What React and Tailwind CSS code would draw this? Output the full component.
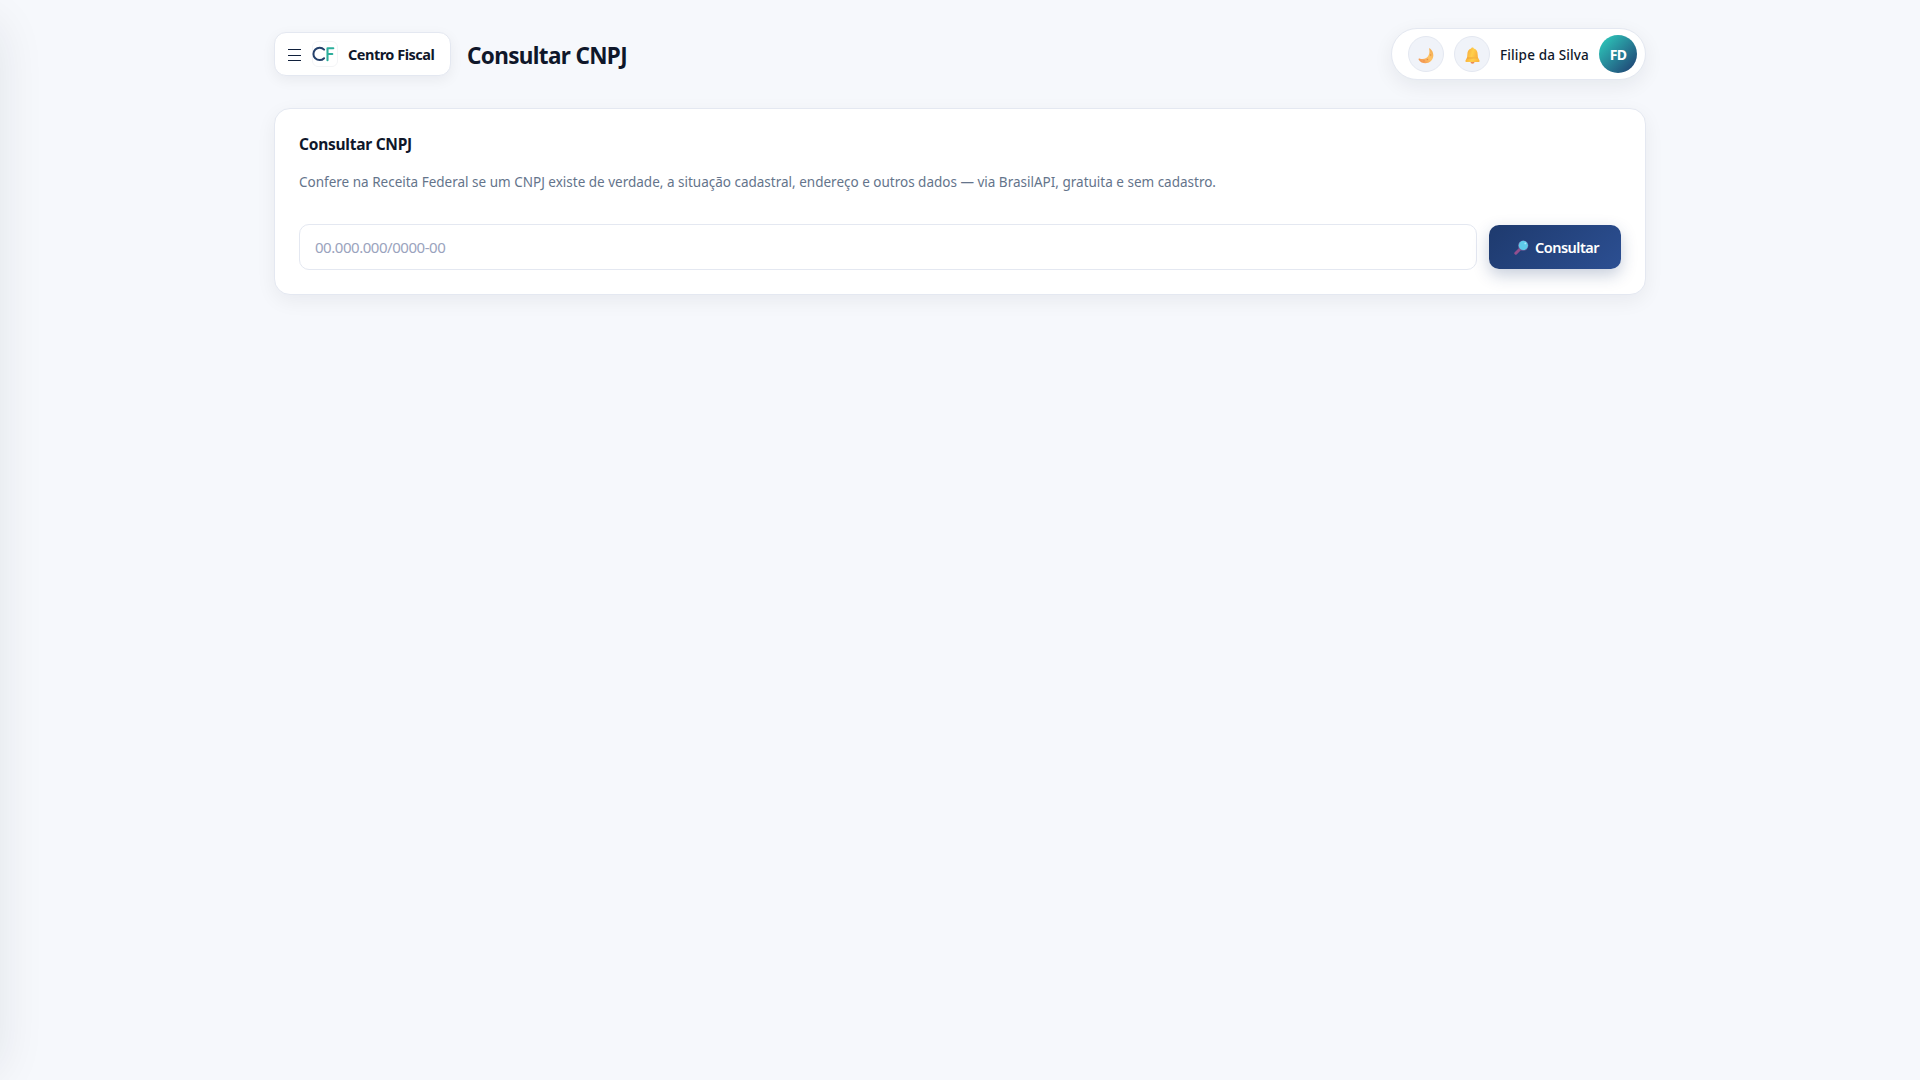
import React from "react";

function MoonIcon() {
  return (
    <svg width="16" height="16" viewBox="0 0 16 16" className="block">
      <defs>
        <linearGradient id="moon" x1="1" y1="0" x2="0" y2="1">
          <stop offset="0" stopColor="#f0a64c" />
          <stop offset="0.45" stopColor="#ffc567" />
          <stop offset="1" stopColor="#f08a4b" />
        </linearGradient>
      </defs>
      <path d="M12 0.5C16 3.6 16.5 9.5 13 13C9.4 16.4 3.4 16 0.6 11.4C0.3 10.6 0.9 10.3 1.5 10.6C5.6 12 9.2 10.4 10.7 7C11.6 5 11.6 3 11.2 1C11.1 0.4 11.5 0.2 12 0.5Z" fill="url(#moon)" />
      <circle cx="12.6" cy="7" r="0.8" fill="#e58f45" />
      <circle cx="9.4" cy="11.5" r="0.8" fill="#e58f45" />
      <circle cx="6" cy="12.8" r="0.6" fill="#e07c4a" />
    </svg>
  );
}

function BellIcon() {
  return (
    <svg width="15" height="17" viewBox="0 0 15 17" className="block">
      <defs>
        <linearGradient id="bell" x1="0" y1="0" x2="1" y2="0.3">
          <stop offset="0" stopColor="#f7a63a" />
          <stop offset="0.6" stopColor="#ffcf4a" />
          <stop offset="1" stopColor="#fbb63d" />
        </linearGradient>
      </defs>
      <ellipse cx="7.5" cy="15" rx="2" ry="1.7" fill="#ea8a55" />
      <path d="M6.2 1.6C6.2 0.2 8.8 0.2 8.8 1.6C11.4 2.2 12.5 4.3 12.6 6.8L13 11H2L2.4 6.8C2.5 4.3 3.6 2.2 6.2 1.6Z" fill="url(#bell)" />
      <path d="M2 10.6H13L14.5 13.4C14.8 14.4 14.2 15 13.4 15H1.6C0.8 15 0.2 14.4 0.5 13.4Z" fill="url(#bell)" />
      <path d="M2 11H13" stroke="#eb9a38" strokeWidth="0.6" />
    </svg>
  );
}

function SearchIcon() {
  return (
    <svg width="15" height="15" viewBox="0 0 15 15" className="block">
      <path d="M1.8 13.2L5.8 9.2" stroke="#934f8e" strokeWidth="3" strokeLinecap="round" />
      <circle cx="9.2" cy="5.6" r="5.2" fill="#6b5f9c" />
      <circle cx="9.3" cy="5.4" r="4.6" fill="#5ecbea" />
      <circle cx="11.3" cy="3.4" r="0.9" fill="#a9ebfa" />
    </svg>
  );
}

function Logo() {
  return (
    <svg width="26" height="26" viewBox="0 0 26 26" className="block">
      <rect x="0.5" y="0.5" width="25" height="25" rx="5.5" fill="#fff" stroke="#f3f4f6" />
      <path d="M12.1 8.6A6.2 6.2 0 1 0 12.1 17.2" fill="none" stroke="#24406b" strokeWidth="2" strokeLinecap="round" />
      <path d="M15.5 19.2V7.2H21.3M15.5 13H20.3" fill="none" stroke="#2bae9b" strokeWidth="2.1" strokeLinecap="round" strokeLinejoin="round" />
    </svg>
  );
}

function Header() {
  return (
    <header className="flex h-[52px] items-center justify-between">
      <div className="flex items-center">
        <button className="flex h-11 w-[177px] items-center rounded-xl border border-[#e4e8f1] bg-white pl-[13px] shadow-[0_4px_14px_rgba(15,23,42,0.06)]">
          <svg width="13" height="12" viewBox="0 0 13 12" className="block translate-y-px">
            <path d="M0 0.5H13M0 6.5H13M0 11.5H13" stroke="#10203c" strokeWidth="1.2" />
          </svg>
          <span className="ml-[11px]"><Logo /></span>
          <span className="ml-[10px] whitespace-nowrap pt-px text-[14.5px] font-bold tracking-[-0.5px] text-[#0f172a]">Centro Fiscal</span>
        </button>
        <h1 className="ml-4 whitespace-nowrap pt-1 text-[22.5px] leading-8 font-bold tracking-[-0.65px] text-[#0f172a]">Consultar CNPJ</h1>
      </div>
      <div className="flex h-[52px] w-[255px] items-center rounded-full border border-[#e4e8f1] bg-white pl-4 shadow-[0_6px_20px_rgba(15,23,42,0.07)]">
        <button className="flex size-9 items-center justify-center rounded-full border border-[#e4e8f1] bg-[#f0f3f9] pt-1"><MoonIcon /></button>
        <button className="ml-[10px] flex size-9 items-center justify-center rounded-full border border-[#e4e8f1] bg-[#f0f3f9] pt-[2px]"><BellIcon /></button>
        <span className="ml-[10px] w-[89px] whitespace-nowrap pt-[2px] text-[13.5px] font-medium tracking-[0.14px] text-[#0f172a]">Filipe da Silva</span>
        <span className="ml-[10px] flex size-[38px] items-center justify-center rounded-full bg-linear-135 from-[#2dd4bf] to-[#1e3a6e] pt-px text-[14px] font-bold tracking-[-0.6px] text-white">FD</span>
      </div>
    </header>
  );
}

export default function App() {
  return (
    <div className="relative h-screen overflow-hidden bg-[#f6f8fc] font-['Noto_Sans','Open_Sans',sans-serif]">
      <div className="absolute top-3.5 bottom-3.5 -left-[280px] w-[280px] rounded-[20px] shadow-[0_8px_48px_rgba(15,35,42,0.09)]" />
      <div className="mx-auto w-[1372px] pt-7">
        <Header />
        <section className="mt-7 h-[187px] rounded-2xl border border-[#e4e8f1] bg-white px-6 pt-[23px] shadow-[0_6px_20px_rgba(15,23,42,0.06)]">
          <h2 className="h-6 whitespace-nowrap text-[15.5px] leading-6 font-bold tracking-[-0.25px] text-[#0f172a]">Consultar CNPJ</h2>
          <p className="mt-[14px] h-6 whitespace-nowrap text-[13.5px] leading-[25px] text-[#64748b]">
            Confere na Receita Federal se um CNPJ existe de verdade, a situação cadastral, endereço e outros dados — via BrasilAPI, gratuita e sem cadastro.
          </p>
          <div className="mt-[30px] flex items-center gap-3">
            <input placeholder="00.000.000/0000-00" className="h-[46px] flex-1 rounded-[10px] border border-[#e4e8f1] bg-white px-[15px] text-[15px] tracking-[-0.46px] text-[#0f172a] outline-none placeholder:text-[#9aa3bd]" />
            <button className="flex h-11 w-[132px] items-center rounded-[10px] bg-linear-135 from-[#1e3a6e] to-[#2c4f92] pl-[25px] text-[14.5px] font-semibold tracking-[-0.5px] text-white shadow-[0_6px_16px_rgba(30,58,110,0.25)]">
              <SearchIcon />
              <span className="ml-[6px] whitespace-nowrap pt-px">Consultar</span>
            </button>
          </div>
        </section>
      </div>
    </div>
  );
}
